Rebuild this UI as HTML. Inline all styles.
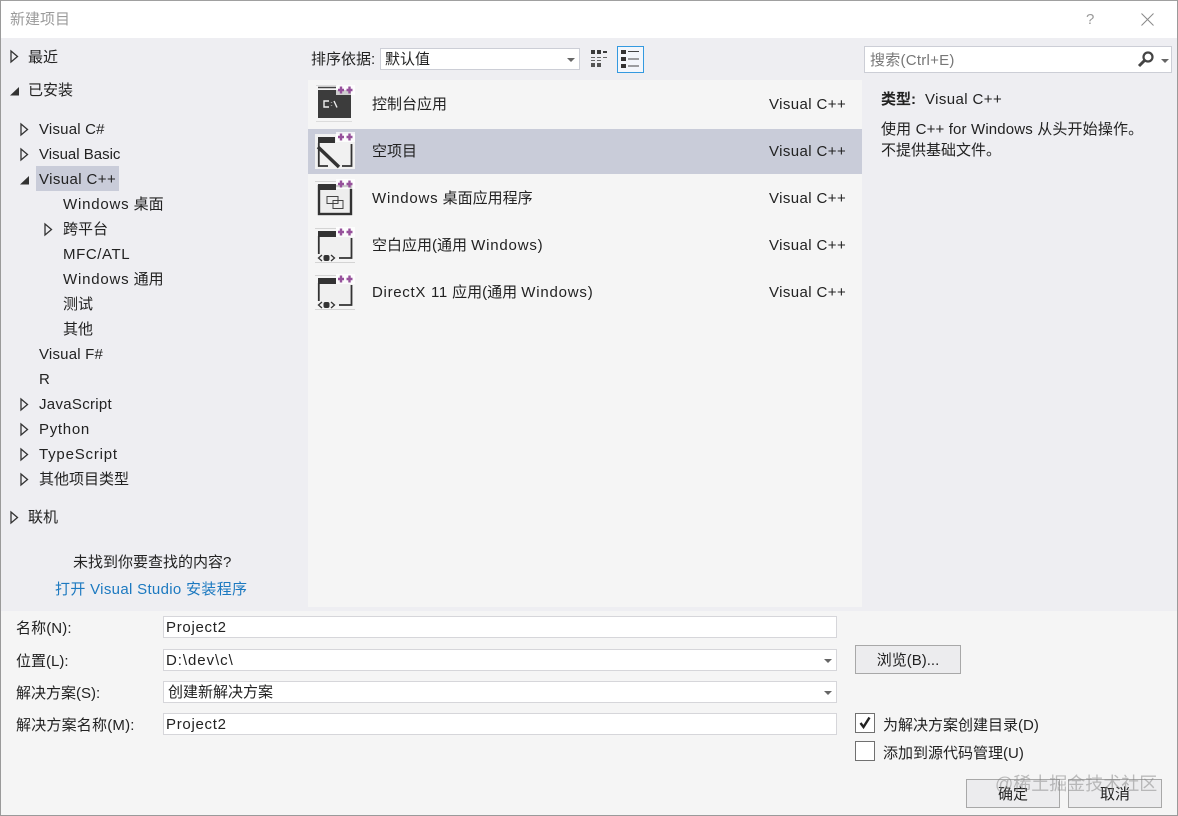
<!DOCTYPE html>
<html><head><meta charset="utf-8">
<style>
html,body{margin:0;padding:0;width:1178px;height:816px;overflow:hidden;background:#f5f5f5}
body{position:relative;font-family:"Liberation Sans","Noto Sans CJK SC",sans-serif;font-size:15px;color:#222}
.a{position:absolute;box-sizing:border-box}
.t{position:absolute;white-space:nowrap;line-height:20px;height:20px;margin-top:1px}
.r{position:absolute;left:769px;white-space:nowrap;line-height:20px;letter-spacing:.4px;margin-top:1px}
.w{letter-spacing:.8px}
.box{position:absolute;box-sizing:border-box;background:#fff;border:1px solid #d6d6da}
svg{position:absolute;overflow:visible}
.btn{position:absolute;box-sizing:border-box;background:#ececee;border:1px solid #a8a8a8;text-align:center}
</style></head><body>

<!-- window frame -->
<div class="a" style="left:0;top:0;width:1178px;height:38px;background:#fff;border-top:1px solid #a0a0a0"></div>
<div class="a" style="left:0;top:38px;width:1178px;height:573px;background:#eeeef2"></div>
<div class="a" style="left:308px;top:80px;width:554px;height:527px;background:#f5f5f5"></div>
<div class="a" style="left:308px;top:129px;width:554px;height:45px;background:#c9ccd9"></div>
<div class="a" style="left:0;top:0;width:1px;height:816px;background:#9a9a9a"></div>
<div class="a" style="left:1177px;top:0;width:1px;height:816px;background:#9a9a9a"></div>
<div class="a" style="left:0;top:815px;width:1178px;height:1px;background:#9a9a9a"></div>

<div class="t" style="left:10px;top:9px;color:#9b9b9b;font-size:15px">新建项目</div>
<div class="t" style="left:1086px;top:9px;color:#9a9a9a;font-size:15px">?</div>
<svg style="left:1141px;top:13px" width="13" height="13"><path d="M.5.500l12 12M12.500.500l-12 12" stroke="#8a8a8a" fill="none"/></svg>

<!-- icons and small glyphs -->
<svg style="left:0;top:0" width="1178" height="816">
<defs>
<path id="op" d="M0 0l6.500 5.500L0 11z" fill="none" stroke="#333" stroke-width="1.300"/>
<path id="cl" d="M9 0v8.500H0z" fill="#333"/>
<g id="plus"><rect x="-5" y="-5" width="19" height="10" fill="#fff" opacity=".75"/><path d="M0-3.500v7M-3 0h6M8.500-3.500v7M5.500 0h6" stroke="#96519b" stroke-width="2.400" fill="none"/></g>
<g id="app">
<path d="M315 .5H336M315 34.500H355" stroke="#d4d4d4" fill="none"/>
<rect x="318" y="3" width="34" height="27" fill="#f0f0f0"/>
<rect x="318" y="3" width="18" height="6" fill="#333"/>
<path d="M318.800 8V26M351.500 10V30H339" stroke="#333" stroke-width="1.800" fill="none"/>
<path d="M322 27l-3.500 3 3.500 3M331 27l3.500 3-3.500 3" stroke="#333" stroke-width="1.300" fill="none"/>
<rect x="323.500" y="27" width="6" height="6" rx="2" fill="#333"/>
<use href="#plus" x="341" y="4"/>
</g>
</defs>
<use href="#op" x="11" y="51"/><use href="#cl" x="10" y="87"/>
<use href="#op" x="21" y="124"/><use href="#op" x="21" y="149"/><use href="#cl" x="20" y="176"/>
<use href="#op" x="45" y="224"/><use href="#op" x="21" y="399"/><use href="#op" x="21" y="424"/>
<use href="#op" x="21" y="449"/><use href="#op" x="21" y="474"/><use href="#op" x="11" y="512"/>
</svg>

<!-- tree -->
<div class="t" style="left:28px;top:47px">最近</div>
<div class="t" style="left:28px;top:80px">已安装</div>
<div class="t" style="left:39px;top:119px;letter-spacing:.2px">Visual C#</div>
<div class="t" style="left:39px;top:144px">Visual Basic</div>
<div class="a" style="left:36px;top:166px;width:83px;height:25px;background:#c9ccd9"></div>
<div class="t" style="left:39px;top:169px;letter-spacing:.4px">Visual C++</div>
<div class="t" style="left:63px;top:194px"><span class="w">Windows</span> 桌面</div>
<div class="t" style="left:63px;top:219px">跨平台</div>
<div class="t" style="left:63px;top:244px;letter-spacing:.6px">MFC/ATL</div>
<div class="t" style="left:63px;top:269px"><span class="w">Windows</span> 通用</div>
<div class="t" style="left:63px;top:294px">测试</div>
<div class="t" style="left:63px;top:319px">其他</div>
<div class="t" style="left:39px;top:344px;letter-spacing:.2px">Visual F#</div>
<div class="t" style="left:39px;top:369px">R</div>
<div class="t" style="left:39px;top:394px;letter-spacing:.3px">JavaScript</div>
<div class="t" style="left:39px;top:419px;letter-spacing:.7px">Python</div>
<div class="t" style="left:39px;top:444px;letter-spacing:.8px">TypeScript</div>
<div class="t" style="left:39px;top:469px">其他项目类型</div>
<div class="t" style="left:28px;top:507px">联机</div>
<div class="t" style="left:73px;top:552px">未找到你要查找的内容?</div>
<div class="t" style="left:55px;top:579px;color:#1c79c0;letter-spacing:.32px">打开 Visual Studio 安装程序</div>

<!-- sort bar -->
<div class="t" style="left:311px;top:49px;font-size:15px">排序依据:</div>
<div class="box" style="left:380px;top:48px;width:200px;height:22px;border-color:#ccced6"></div>
<div class="t" style="left:385px;top:49px">默认值</div>
<svg style="left:567px;top:58px" width="8" height="4"><path d="M0 0h8L4 4z" fill="#666"/></svg>
<svg style="left:591px;top:50px" width="17" height="18"><path d="M0 0h4v4H0zM6 0h4v4H6z" fill="#3a3a3a"/><path d="M12 1h4v2h-4z" fill="#3a3a3a"/><path d="M0 7h4v1H0zM6 7h4v1H6zM12 7h4v1h-4zM0 10h4v1H0zM6 10h4v1H6z" fill="#666"/><path d="M0 13h4v4H0zM6 13h4v4H6z" fill="#3a3a3a" opacity=".85"/></svg>
<div class="a" style="left:617px;top:46px;width:27px;height:27px;border:1px solid #3399e0;background:#f3f6fb"></div>
<svg style="left:621px;top:50px" width="19" height="18"><path d="M0 0h5v4H0zM0 7h5v4H0zM0 14h5v4H0z" fill="#333"/><path d="M7 1.500h11M7 9h11M7 16h11" stroke="#444" fill="none"/></svg>

<!-- list icons -->
<svg style="left:0;top:0" width="1178" height="816">
<!-- console -->
<path d="M316 85.500H337M316 121.500H352" stroke="#dcdcdc" fill="none"/>
<path d="M318 87.500H336" stroke="#444" stroke-width="1.500"/>
<rect x="318" y="90" width="33" height="28" fill="#3c3c3c"/>
<path d="M329 101h-5v6h5M331.500 102v.500M331.500 105.500v.500M334 101l3 6.500" stroke="#eee" stroke-width="1.400" fill="none"/>
<use href="#plus" x="341" y="90"/>
<!-- empty -->
<rect x="315" y="134" width="40" height="35" fill="#f1f1f1"/>
<rect x="318" y="137" width="17" height="6" fill="#333"/>
<path d="M318.800 143V166H328M351.500 144V166H342" stroke="#333" stroke-width="1.800" fill="none"/>
<path d="M318 147L339 167" stroke="#333" stroke-width="3.500"/>
<use href="#plus" x="341" y="137"/>
<!-- windows -->
<path d="M315 181.500H336" stroke="#d4d4d4"/>
<rect x="319" y="186" width="32" height="28" fill="#eee" stroke="#333" stroke-width="2.400"/>
<rect x="318" y="184" width="18" height="6" fill="#333"/>
<path d="M327 196.500h11v7h-11zM333 200.500h10v8h-10z" fill="#eee" stroke="#444"/>
<use href="#plus" x="341" y="184"/>
</svg>
<svg style="left:0;top:228px" width="1178" height="40"><use href="#app"/></svg>
<svg style="left:0;top:275px" width="1178" height="40"><use href="#app"/></svg>

<div class="t" style="left:372px;top:94px">控制台应用</div>
<div class="r" style="top:94px">Visual C++</div>
<div class="t" style="left:372px;top:141px">空项目</div>
<div class="r" style="top:141px">Visual C++</div>
<div class="t" style="left:372px;top:188px"><span class="w">Windows</span> 桌面应用程序</div>
<div class="r" style="top:188px">Visual C++</div>
<div class="t" style="left:372px;top:235px">空白应用(通用 <span class="w">Windows</span>)</div>
<div class="r" style="top:235px">Visual C++</div>
<div class="t" style="left:372px;top:282px"><span style="letter-spacing:.7px">DirectX 11</span> 应用(通用 <span class="w">Windows</span>)</div>
<div class="r" style="top:282px">Visual C++</div>

<!-- right panel -->
<div class="box" style="left:864px;top:46px;width:308px;height:27px;border-color:#ccced6"></div>
<div class="t" style="left:870px;top:50px;color:#777;font-size:15px;letter-spacing:.25px">搜索(Ctrl+E)</div>
<svg style="left:1136px;top:51px" width="34" height="17"><circle cx="12" cy="6" r="4.500" fill="none" stroke="#444" stroke-width="2.200"/><path d="M8.500 9.500L3 15" stroke="#444" stroke-width="3"/><path d="M25 8h8l-4 4z" fill="#666"/></svg>
<div class="t" style="left:881px;top:89px;font-size:15px;font-weight:bold">类型:</div>
<div class="t" style="left:925px;top:89px;letter-spacing:.4px">Visual C++</div>
<div class="t" style="left:881px;top:119px;letter-spacing:.15px">使用 C++ for Windows 从头开始操作。</div>
<div class="t" style="left:881px;top:140px">不提供基础文件。</div>

<!-- form -->
<div class="t" style="left:16px;top:618px;letter-spacing:.1px">名称(N):</div>
<div class="box" style="left:163px;top:616px;width:674px;height:22px"></div>
<div class="t" style="left:166px;top:617px;letter-spacing:.7px">Project2</div>
<div class="t" style="left:16px;top:651px">位置(L):</div>
<div class="box" style="left:163px;top:649px;width:674px;height:22px"></div>
<div class="t" style="left:166px;top:650px;letter-spacing:.95px">D:\dev\c\</div>
<svg style="left:824px;top:659px" width="8" height="4"><path d="M0 0h8L4 4z" fill="#666"/></svg>
<div class="t" style="left:16px;top:683px">解决方案(S):</div>
<div class="box" style="left:163px;top:681px;width:674px;height:22px"></div>
<div class="t" style="left:168px;top:682px">创建新解决方案</div>
<svg style="left:824px;top:691px" width="8" height="4"><path d="M0 0h8L4 4z" fill="#666"/></svg>
<div class="t" style="left:16px;top:715px;letter-spacing:.2px">解决方案名称(M):</div>
<div class="box" style="left:163px;top:713px;width:674px;height:22px"></div>
<div class="t" style="left:166px;top:714px;letter-spacing:.7px">Project2</div>

<div class="btn" style="left:855px;top:645px;width:106px;height:29px;line-height:30px">浏览(B)...</div>

<div class="a" style="left:855px;top:713px;width:20px;height:20px;background:#fff;border:1px solid #707070"></div>
<svg style="left:859px;top:717px" width="12" height="12"><path d="M1.500 6l3 4L10.500 .5" fill="none" stroke="#222" stroke-width="2.400"/></svg>
<div class="t" style="left:883px;top:715px">为解决方案创建目录(D)</div>
<div class="a" style="left:855px;top:741px;width:20px;height:20px;background:#fff;border:1px solid #707070"></div>
<div class="t" style="left:883px;top:743px">添加到源代码管理(U)</div>

<div class="btn" style="left:966px;top:779px;width:94px;height:29px;line-height:30px">确定</div>
<div class="btn" style="left:1068px;top:779px;width:94px;height:29px;line-height:30px">取消</div>
<div class="t" style="left:995px;top:773px;color:rgba(130,130,130,.5);font-size:18px">@稀土掘金技术社区</div>
</body></html>
